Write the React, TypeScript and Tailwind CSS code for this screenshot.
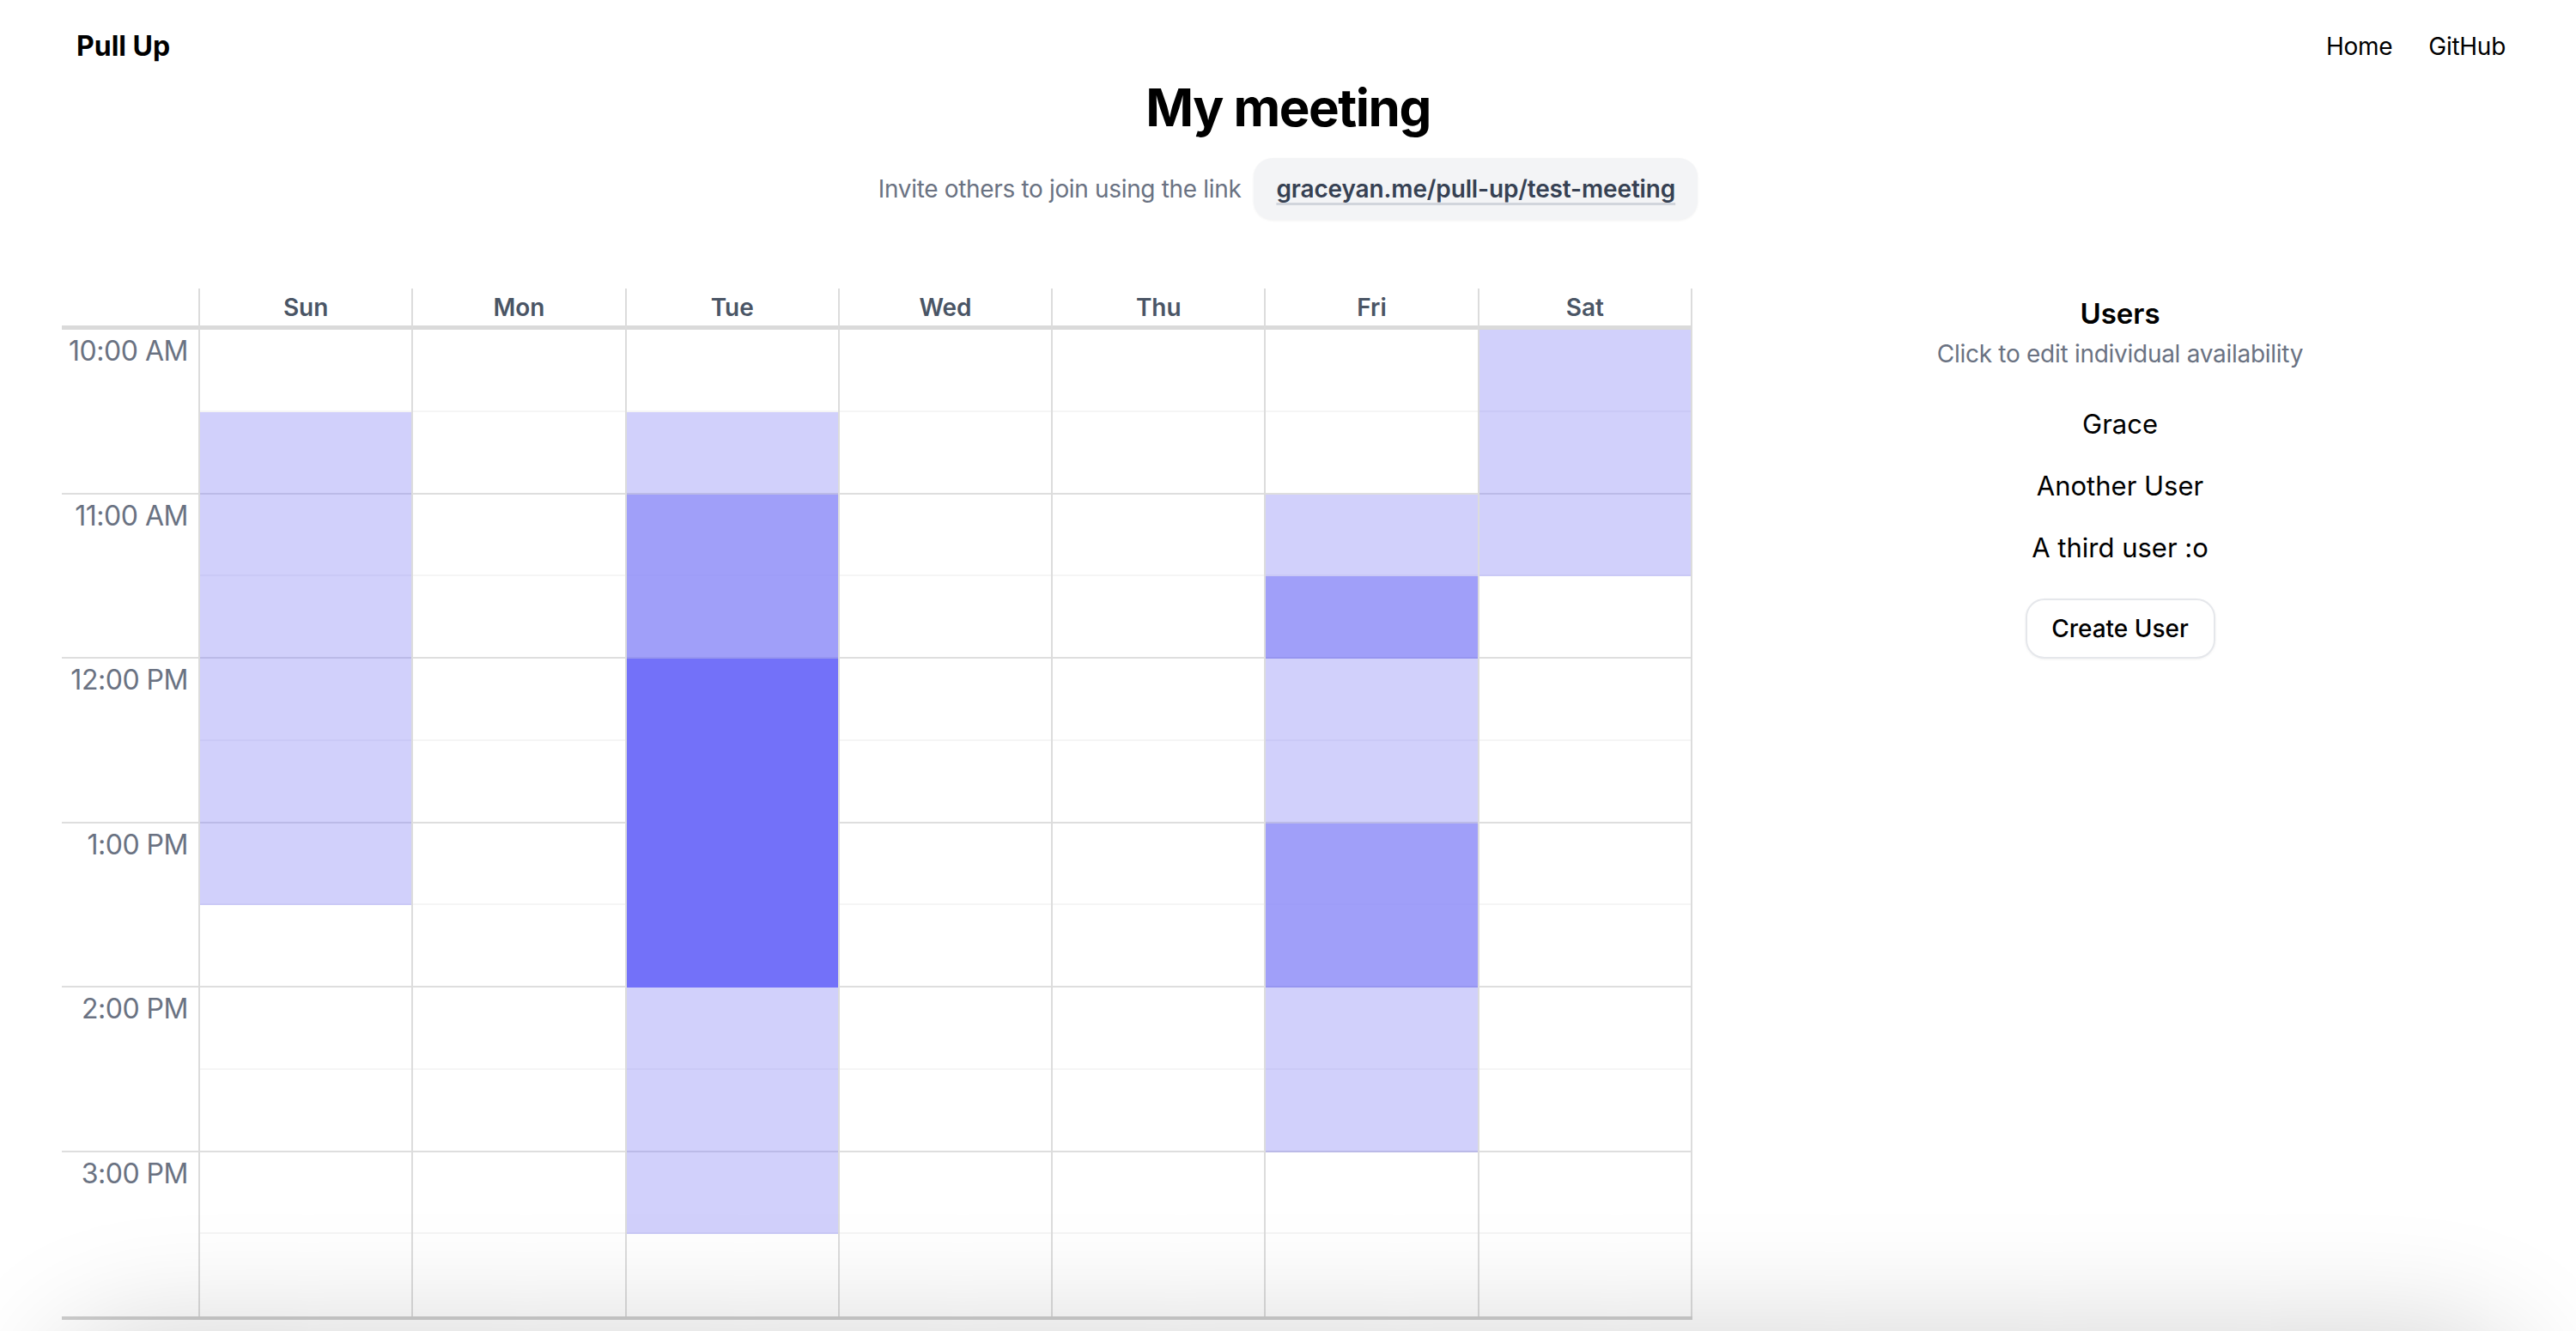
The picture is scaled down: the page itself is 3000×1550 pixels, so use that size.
import React from "react";

const days = ["Sun", "Mon", "Tue", "Wed", "Thu", "Fri", "Sat"];
const hours = ["10:00 AM", "11:00 AM", "12:00 PM", "1:00 PM", "2:00 PM", "3:00 PM"];

// how many users are free in each half-hour slot, 10:00 AM to 4:00 PM
const availability: number[][] = [
  [0, 1, 1, 1, 1, 1, 1, 0, 0, 0, 0, 0],
  [0, 0, 0, 0, 0, 0, 0, 0, 0, 0, 0, 0],
  [0, 1, 2, 2, 3, 3, 3, 3, 1, 1, 1, 0],
  [0, 0, 0, 0, 0, 0, 0, 0, 0, 0, 0, 0],
  [0, 0, 0, 0, 0, 0, 0, 0, 0, 0, 0, 0],
  [0, 0, 1, 2, 1, 1, 2, 2, 1, 1, 0, 0],
  [1, 1, 1, 0, 0, 0, 0, 0, 0, 0, 0, 0],
];

const fill = ["bg-white", "bg-[#d1d0fb]", "bg-[#a09ff9]", "bg-[#7371f9]"];
const halfLine = ["border-[#f5f5f5]", "border-[#cac9f6]", "border-[#9e9df8]", "border-[#7371f9]"];
const hourLine = ["border-[#dedede]", "border-[#bbbae7]", "border-[#9695f0]", "border-[#7371f9]"];

const users = ["Grace", "Another User", "A third user :o"];

function Slot({ level, index }: { level: number; index: number }) {
  const last = index === 11;
  const line = index % 2 === 0 ? halfLine[level] : hourLine[level];
  return (
    <div
      className={`h-[95.75px] ${fill[level]} ${last ? "" : `border-b-2 ${line}`}`}
    />
  );
}

function Calendar() {
  return (
    <div className="w-[1899px] shrink-0 flex border-b-4 border-[#cfcfcf]">
      <div className="w-[159px] shrink-0">
        <div className="h-[48px] border-b-[5px] border-[#dadada]" />
        {hours.map((h, i) => (
          <div
            key={h}
            className={`h-[191.5px] pt-[1px] pr-[12px] text-right text-[32px] leading-[48px] tracking-[-0.015em] text-gray-500 ${
              i < hours.length - 1 ? "border-b-2 border-[#dedede]" : ""
            }`}
          >
            {h}
          </div>
        ))}
      </div>
      {days.map((d, di) => (
        <div
          key={d}
          className={`flex-1 flex flex-col border-l-2 border-[#dcdcdc] ${
            di === days.length - 1 ? "border-r-2" : ""
          }`}
        >
          <div className="h-[48px] pt-[2px] border-b-[5px] border-[#dadada] text-center text-[28px] leading-[40px] font-semibold text-gray-600">
            {d}
          </div>
          {availability[di].map((lvl, si) => (
            <Slot key={si} level={lvl} index={si} />
          ))}
        </div>
      ))}
    </div>
  );
}

function UsersPanel() {
  return (
    <div className="flex-1 ml-[47px] pr-[80px] pt-[5px] flex flex-col items-center">
      <h2 className="text-[33px] leading-[48px] font-semibold text-black">Users</h2>
      <p className="mt-[3px] text-[28px] leading-[40px] tracking-[-0.01em] text-gray-500">
        Click to edit individual availability
      </p>
      <div className="mt-[40px] flex flex-col items-center gap-[28px]">
        {users.map((u) => (
          <button key={u} className="text-[31px] leading-[44px] text-black">
            {u}
          </button>
        ))}
      </div>
      <button className="mt-[37px] w-[221px] py-[13px] rounded-[22px] border-2 border-gray-200 bg-white shadow-[0_1px_3px_rgba(0,0,0,0.06)] text-[28px] leading-[40px] font-medium text-black">
        Create User
      </button>
    </div>
  );
}

export default function App() {
  return (
    <div className="min-h-screen bg-white font-['Inter',sans-serif] text-black">
      <nav className="h-[78px] pt-[30px] pl-[89px] pr-[82px] flex items-center justify-between">
        <span className="text-[32px] leading-[48px] font-bold">Pull Up</span>
        <div className="flex items-center gap-[42px] text-[28px] leading-[40px] tracking-[-0.01em]">
          <a href="#">Home</a>
          <a href="#">GitHub</a>
        </div>
      </nav>

      <h1 className="mt-[11px] text-center text-[60px] leading-[72px] font-bold tracking-tight">
        My meeting
      </h1>

      <div className="mt-[23px] flex items-center justify-center">
        <span className="text-[28px] leading-[40px] tracking-[-0.012em] text-gray-500">
          Invite others to join using the link
        </span>
        <div className="ml-[15px] bg-[#f3f4f6] rounded-[22px] px-[26px] py-[16px] shadow-[0_1px_3px_rgba(0,0,0,0.06)]">
          <a
            href="#"
            className="text-[28px] leading-[40px] font-semibold tracking-[-0.005em] text-gray-700 underline decoration-gray-300 decoration-[3px] underline-offset-[6px]"
          >
            graceyan.me/pull-up/test-meeting
          </a>
        </div>
      </div>

      <main className="mt-[80px] pl-[72px] flex items-start">
        <Calendar />
        <UsersPanel />
      </main>

      <div className="pointer-events-none fixed left-[60px] right-[60px] top-[1550px] h-[200px] rounded-[100px] shadow-[0_0_140px_0_rgba(0,0,0,0.18)]" />
    </div>
  );
}
